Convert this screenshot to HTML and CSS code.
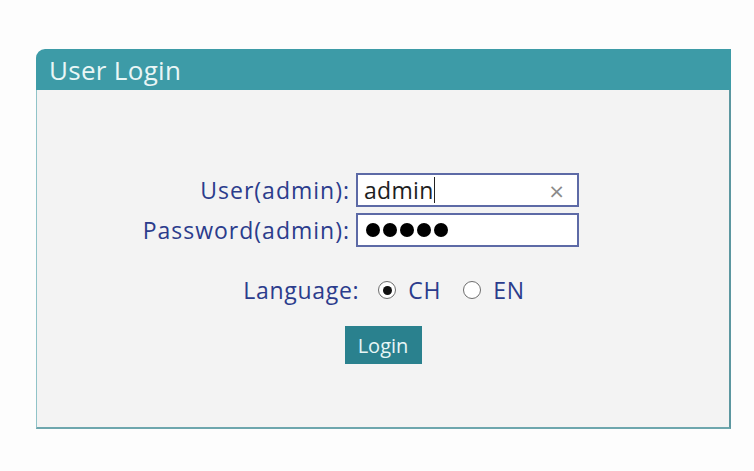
FILE: index.html
```html
<!DOCTYPE html>
<html>
<head>
<meta charset="utf-8">
<link rel="stylesheet" href="styles.css">
</head>
<body>
<div class="panel">
  <div class="panel-head">User Login</div>
  <div class="panel-body">
    <div class="form-grid">
      <label class="lbl">User(admin):</label>
      <div class="field">
        <span class="field-text">admin</span><span class="caret"></span>
        <span class="clear">&#215;</span>
      </div>
      <label class="lbl">Password(admin):</label>
      <div class="field">
        <span class="dots"><i></i><i></i><i></i><i></i><i></i></span>
      </div>
    </div>
    <div class="lang-row">
      <span class="lang-lbl">Language:</span>
      <span class="radio checked"></span><span class="opt">CH</span>
      <span class="radio"></span><span class="opt">EN</span>
    </div>
    <div class="btn-row">
      <button class="btn">Login</button>
    </div>
  </div>
</div>
</body>
</html>
```
FILE: styles.css
```css
html, body {
  margin: 0;
  padding: 0;
  background: #fdfdfd;
  font-family: "Open Sans", Lato, sans-serif;
}
.panel {
  margin: 49px 0 0 36px;
  width: 695px;
}
.panel-head {
  height: 41px;
  background: #3d9ba7;
  border-top-left-radius: 9px;
  color: #e9f6f6;
  font-size: 26px;
  letter-spacing: 0.3px;
  line-height: 42px;
  padding-left: 13px;
}
.panel-body {
  height: 337px;
  background: #f3f3f3;
  border-left: 1px solid #90c3c8;
  border-right: 2px solid #5c97a0;
  border-bottom: 2px solid #6ea6ad;
  display: flex;
  flex-direction: column;
}
.form-grid {
  display: grid;
  grid-template-columns: 313px 223px;
  column-gap: 6px;
  row-gap: 6px;
  padding-top: 83px;
}
.lbl {
  text-align: right;
  color: #2b3c8c;
  font-size: 23px;
  letter-spacing: 1px;
  line-height: 34px;
}
.field {
  position: relative;
  height: 34px;
  box-sizing: border-box;
  border: 2px solid #5d6aa6;
  background: #fff;
  display: flex;
  align-items: center;
  padding-left: 6px;
}
.field-text {
  font-size: 23px;
  letter-spacing: 0.3px;
  color: #1e1e1e;
}
.caret {
  width: 1px;
  height: 26px;
  background: #222;
  margin-left: 0;
}
.clear {
  position: absolute;
  right: 12px;
  top: 4px;
  color: #8a8a8a;
  font-size: 20px;
  font-family: "DejaVu Sans", sans-serif;
}
.dots {
  display: flex;
  gap: 3px;
  margin-left: 2px;
}
.dots i {
  display: block;
  width: 14px;
  height: 14px;
  border-radius: 50%;
  background: #000;
}
.lang-row {
  display: flex;
  align-items: center;
  justify-content: center;
  margin-top: 26px;
  padding-left: 2px;
  height: 34px;
  color: #2b3c8c;
  font-size: 23px;
  letter-spacing: 0.7px;
}
.lang-lbl {
  margin-right: 19px;
}
.radio {
  width: 18px;
  height: 18px;
  box-sizing: border-box;
  border: 1px solid #6d6d6d;
  border-radius: 50%;
  background: #fff;
  position: relative;
}
.radio.checked::after {
  content: "";
  position: absolute;
  left: 3.5px;
  top: 3.5px;
  width: 9px;
  height: 9px;
  border-radius: 50%;
  background: #111;
}
.opt {
  margin-left: 12px;
  margin-right: 22px;
}
.opt:last-child {
  margin-right: 0;
}
.btn-row {
  display: flex;
  justify-content: center;
  margin-top: 19px;
}
.btn {
  width: 77px;
  height: 38px;
  background: #2a818e;
  border: none;
  color: #e6f6f6;
  font-family: "Open Sans", Lato, sans-serif;
  font-size: 20px;
  padding: 0;
}
```
